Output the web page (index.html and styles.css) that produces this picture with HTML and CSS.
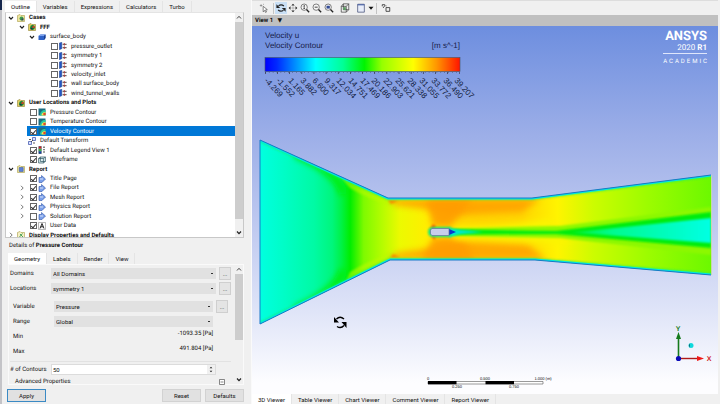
FILE: index.html
```html
<!DOCTYPE html>
<html lang="en">
<head>
  <meta charset="UTF-8">
  <meta name="viewport" content="width=device-width, initial-scale=1.0">
  <title>CFD-Post</title>
  <link rel="stylesheet" href="styles.css">
</head>
<body>
  <!-- Shared icons -->
  <svg class="defs" aria-hidden="true">
    <symbol id="chev-down" viewBox="0 0 8 8"><path d="M2 3l2 2.200 2-2.200" fill="none" stroke="#222" stroke-width="1.200"/></symbol>
    <symbol id="chev-up" viewBox="0 0 8 8"><path d="M2 5l2-2.200 2 2.200" fill="none" stroke="#444" stroke-width="1"/></symbol>
    <symbol id="chev-right" viewBox="0 0 8 8"><path d="M3 1.800l2.200 2.200-2.200 2.200" fill="none" stroke="#777" stroke-width="1"/></symbol>
    <symbol id="folder" viewBox="0 0 8 8">
      <path d="M.5 1.500L3 .5l1 1h3.500v6h-7z" fill="#f0e6a0" stroke="#a89b45" stroke-width=".6"/>
      <circle cx="4.500" cy="4.500" r="2" fill="#3c9c52"/><path d="M4.500 4.500h2v2h-2z" fill="#345"/>
    </symbol>
    <symbol id="folder-case" viewBox="0 0 8 8">
      <path d="M.5 1.500L3 .5l1 1h3.500v6h-7z" fill="#e5d262" stroke="#8d8130" stroke-width=".6"/>
      <circle cx="4.500" cy="4.500" r="2.400" fill="#17803a"/><path d="M4.500 3h2v2h-2z" fill="#d33a25"/><path d="M2.500 5h2v1.500h-2z" fill="#134"/>
    </symbol>
    <symbol id="folder-report" viewBox="0 0 8 8">
      <path d="M.5 1.500L3 .5l1 1h3.500v6h-7z" fill="#eee7a5" stroke="#a89b45" stroke-width=".6"/>
      <path d="M2.200 2.500h4v4h-4z" fill="#5b80d8" stroke="#35509c" stroke-width=".5"/>
    </symbol>
    <symbol id="folder-props" viewBox="0 0 8 8">
      <path d="M.5 1.500L3 .5l1 1h3.500v6h-7z" fill="#f4f0c4" stroke="#a89b45" stroke-width=".6"/>
      <path d="M2.500 6l3-3.500M3 3l3 3" stroke="#3c9c52" stroke-width=".9"/>
    </symbol>
    <symbol id="body" viewBox="0 0 8 8">
      <path d="M.5 3l2-1.500h5v3.500l-1.500 2H.5z" fill="#2f62c8"/><path d="M.5 3l2-1.500h5L6 3z" fill="#7da2ee"/><path d="M6 3l1.500-1.500V5L6 7z" fill="#183d8c"/>
    </symbol>
    <symbol id="boundary" viewBox="0 0 8 8">
      <path d="M.3 1L2.800.3v6.400L.3 7.700z" fill="#2456c4" stroke="#143273" stroke-width=".4"/>
      <path d="M3.600 2.300h4M3.600 5.700h4" stroke="#333" stroke-width=".9"/><path d="M5.300 1v2.600M5.300 4.400V7" stroke="#b33" stroke-width=".9"/>
    </symbol>
    <symbol id="contour" viewBox="0 0 8 8">
      <path d="M.5.5h7v7h-7z" fill="#1a6c80"/><path d="M2 7.500C2 4 4 2 7.500 2v5.500z" fill="#27c8a0"/><path d="M3.500 7.500c0-2 1.500-3.500 4-3.500v3.500z" fill="#f5e850"/><circle cx="6.500" cy="6" r="1.300" fill="#e2442c"/>
    </symbol>
    <symbol id="transform" viewBox="0 0 8 8">
      <path d="M.5 4.500h3v3h-3zM4.500.5h3v3h-3z" fill="#dbe3ff" stroke="#3149a8" stroke-width=".7"/><path d="M1 2.500h2M5 6h2M3 5l2-2" stroke="#333" stroke-width=".8"/>
    </symbol>
    <symbol id="legend" viewBox="0 0 8 8">
      <path d="M.8.300h2.500v2.500H.8z" fill="#d22"/><path d="M.8 2.800h2.500v2.400H.8z" fill="#3c4"/><path d="M.8 5.200h2.500v2.500H.8z" fill="#14a"/><path d="M.8.300h2.500v7.400H.8z" fill="none" stroke="#234" stroke-width=".5"/><path d="M6 .5v7" stroke="#333" stroke-width="1.200" stroke-dasharray="1.400 1"/>
    </symbol>
    <symbol id="wireframe" viewBox="0 0 8 8">
      <path d="M.6 2.500h4.800v4.500H.6zM2.400 1h5v4.500h-5zM.6 2.500L2.400 1M5.400 2.500l2-1.500M5.400 7l2-1.500" fill="#bfe0e6" fill-opacity=".5" stroke="#2c5560" stroke-width=".7"/>
    </symbol>
    <symbol id="page" viewBox="0 0 8 8">
      <path d="M1 2.500h2.500v-2L7.500 4 4 7.500H1z" fill="#7ba0ea" stroke="#3156a8" stroke-width=".6"/><path d="M2 4h3" stroke="#fff" stroke-width=".7"/>
    </symbol>
    <symbol id="text-page" viewBox="0 0 8 8">
      <path d="M.5.5h7v7h-7z" fill="#fff" stroke="#888" stroke-width=".6"/><path d="M2 6.500L4 1.500l2 5M2.800 4.800h2.400" fill="none" stroke="#111" stroke-width=".9"/>
    </symbol>
    <symbol id="magnifier" viewBox="0 0 12 12">
      <circle cx="5" cy="5" r="3.800" fill="#f7f7f7" stroke="#444" stroke-width=".8"/><path d="M7.800 7.800L11 11" stroke="#222" stroke-width="1.600"/>
    </symbol>
  </svg>

  <div class="app">
    <!-- Left panel: outline tree and details -->
    <aside class="sidebar">
      <nav class="tabs outline-tabs">
        <button class="tab active">Outline</button>
        <button class="tab">Variables</button>
        <button class="tab">Expressions</button>
        <button class="tab">Calculators</button>
        <button class="tab">Turbo</button>
      </nav>

      <div class="tree">
        <ul class="tree-list">
          <li class="row group"><svg><use href="#chev-down"/></svg><svg><use href="#folder"/></svg><span>Cases</span></li>
          <li class="row l1 group"><svg><use href="#chev-down"/></svg><svg><use href="#folder-case"/></svg><span>FFF</span></li>
          <li class="row l2"><svg><use href="#chev-down"/></svg><svg><use href="#body"/></svg><span>surface_body</span></li>
          <li class="row l3"><svg></svg><input type="checkbox" id="t1"><svg><use href="#boundary"/></svg><label for="t1">pressure_outlet</label></li>
          <li class="row l3"><svg></svg><input type="checkbox" id="t2"><svg><use href="#boundary"/></svg><label for="t2">symmetry 1</label></li>
          <li class="row l3"><svg></svg><input type="checkbox" id="t3"><svg><use href="#boundary"/></svg><label for="t3">symmetry 2</label></li>
          <li class="row l3"><svg></svg><input type="checkbox" id="t4"><svg><use href="#boundary"/></svg><label for="t4">velocity_inlet</label></li>
          <li class="row l3"><svg></svg><input type="checkbox" id="t5"><svg><use href="#boundary"/></svg><label for="t5">wall surface_body</label></li>
          <li class="row l3"><svg></svg><input type="checkbox" id="t6"><svg><use href="#boundary"/></svg><label for="t6">wind_tunnel_walls</label></li>
          <li class="row group"><svg><use href="#chev-down"/></svg><svg><use href="#folder-case"/></svg><span>User Locations and Plots</span></li>
          <li class="row l1"><svg></svg><input type="checkbox" id="t7"><svg><use href="#contour"/></svg><label for="t7">Pressure Contour</label></li>
          <li class="row l1"><svg></svg><input type="checkbox" id="t8"><svg><use href="#contour"/></svg><label for="t8">Temperature Contour</label></li>
          <li class="row l1 selected"><svg></svg><input type="checkbox" id="t9" checked><svg><use href="#contour"/></svg><label for="t9">Velocity Contour</label></li>
          <li class="row l1"><svg></svg><svg><use href="#transform"/></svg><span>Default Transform</span></li>
          <li class="row l1"><svg></svg><input type="checkbox" id="t10" checked><svg><use href="#legend"/></svg><label for="t10">Default Legend View 1</label></li>
          <li class="row l1"><svg></svg><input type="checkbox" id="t11" checked><svg><use href="#wireframe"/></svg><label for="t11">Wireframe</label></li>
          <li class="row group"><svg><use href="#chev-down"/></svg><svg><use href="#folder-report"/></svg><span>Report</span></li>
          <li class="row l1"><svg></svg><input type="checkbox" id="t12" checked><svg><use href="#page"/></svg><label for="t12">Title Page</label></li>
          <li class="row l1"><svg><use href="#chev-right"/></svg><input type="checkbox" id="t13" checked><svg><use href="#page"/></svg><label for="t13">File Report</label></li>
          <li class="row l1"><svg><use href="#chev-right"/></svg><input type="checkbox" id="t14" checked><svg><use href="#page"/></svg><label for="t14">Mesh Report</label></li>
          <li class="row l1"><svg><use href="#chev-right"/></svg><input type="checkbox" id="t15" checked><svg><use href="#page"/></svg><label for="t15">Physics Report</label></li>
          <li class="row l1"><svg><use href="#chev-right"/></svg><input type="checkbox" id="t16"><svg><use href="#page"/></svg><label for="t16">Solution Report</label></li>
          <li class="row l1"><svg></svg><input type="checkbox" id="t17" checked><svg><use href="#text-page"/></svg><label for="t17">User Data</label></li>
          <li class="row group"><svg><use href="#chev-right"/></svg><svg><use href="#folder-props"/></svg><span>Display Properties and Defaults</span></li>
        </ul>
        <div class="scrollbar">
          <svg><use href="#chev-up"/></svg>
          <div class="thumb"></div>
          <svg class="end"><use href="#chev-down"/></svg>
        </div>
      </div>

      <p class="details-title">Details of <strong>Pressure Contour</strong></p>

      <nav class="tabs details-tabs">
        <button class="tab active">Geometry</button>
        <button class="tab">Labels</button>
        <button class="tab">Render</button>
        <button class="tab">View</button>
      </nav>

      <div class="details">
        <form class="fields">
          <div class="field">
            <label for="domains">Domains</label>
            <select id="domains"><option>All Domains</option></select>
            <button type="button" class="more">...</button>
          </div>
          <div class="field">
            <label for="locations">Locations</label>
            <select id="locations"><option>symmetry 1</option></select>
            <button type="button" class="more">...</button>
          </div>
          <div class="field-group">
            <div class="field">
              <label for="variable">Variable</label>
              <select id="variable"><option>Pressure</option></select>
              <button type="button" class="more">...</button>
            </div>
            <div class="field">
              <label for="range">Range</label>
              <select id="range"><option>Global</option></select>
              <span class="blank"></span>
            </div>
            <div class="field value"><span>Min</span><output>-1093.35 [Pa]</output></div>
            <div class="field value"><span>Max</span><output>491.804 [Pa]</output></div>
          </div>
          <div class="field">
            <label for="contours"># of Contours</label>
            <div class="spin">
              <input type="text" id="contours" value="50">
              <svg viewBox="0 0 8 10"><path d="M2.500 3.500L4 2l1.500 1.500zM2.500 6.500L4 8l1.500-1.500z" fill="#222"/></svg>
            </div>
            <span class="blank"></span>
          </div>
          <div class="advanced">
            <span>Advanced Properties</span>
            <svg viewBox="0 0 6 6"><path d="M.5.5h5v5h-5zM1.500 3h3" fill="#fff" stroke="#555" stroke-width=".7"/></svg>
          </div>
        </form>
        <div class="scrollbar">
          <svg><use href="#chev-up"/></svg>
          <div class="thumb short"></div>
          <svg class="end"><use href="#chev-down"/></svg>
        </div>
      </div>

      <div class="actions">
        <button class="action primary">Apply</button>
        <button class="action">Reset</button>
        <button class="action">Defaults</button>
      </div>
    </aside>

    <!-- Right side: 3D viewer -->
    <main class="viewer">
      <div class="toolbar">
        <button class="tool wide" aria-label="Select"><svg viewBox="0 0 12 12"><path d="M5 4l5 4-2.200.3 1.200 2.500-1.200.5L6.700 9 5 10.500z" fill="#fff" stroke="#333" stroke-width=".7"/><path d="M1 3h3M2.500 1.500v3M5 2l1-1" stroke="#777" stroke-width=".8"/></svg></button>
        <span class="sep"></span>
        <button class="tool on" aria-label="Rotate"><svg viewBox="0 0 12 12"><path d="M3 3.500Q6 .8 9.500 3.500M9 8.500Q6 11.200 2.500 8.500" fill="none" stroke="#222" stroke-width="1.400"/><path d="M.5 1.500v4.500h4.500zM11.500 10.500V6H7z" fill="#222"/></svg></button>
        <button class="tool" aria-label="Pan"><svg viewBox="0 0 12 12"><path d="M6 .8L8 3H4zM6 11.200L8 9H4zM.8 6L3 4v4zM11.200 6L9 4v4z" fill="#222"/><path d="M6 4v4M4 6h4" stroke="#888" stroke-width=".6"/></svg></button>
        <button class="tool" aria-label="Zoom"><svg viewBox="0 0 12 12"><use href="#magnifier"/><path d="M5 3v4M4 4l1-1 1 1M4 6l1 1 1-1" fill="none" stroke="#222" stroke-width=".8"/></svg></button>
        <button class="tool" aria-label="Zoom box"><svg viewBox="0 0 12 12"><use href="#magnifier"/><path d="M3.200 5h3.600" stroke="#222" stroke-width="1"/></svg></button>
        <button class="tool" aria-label="Fit view"><svg viewBox="0 0 12 12"><use href="#magnifier"/><path d="M3 3.300h4v3.400H3z" fill="#334b95"/></svg></button>
        <button class="tool wider" aria-label="Projection"><svg viewBox="0 0 12 12"><path d="M1.500 4h6v7h-6zM4 1h6.500v7H4zM1.500 4L4 1M7.500 4l3-3M7.500 11l3-3" fill="none" stroke="#333" stroke-width=".8"/><path d="M4 5h3v3.500H4z" fill="#5a9a60"/></svg></button>
        <button class="tool" aria-label="Viewports"><svg viewBox="0 0 12 12"><path d="M2 1.500h8v9.500H2z" fill="#e8edfa" stroke="#444f78" stroke-width=".9"/><path d="M2 2.200h8" stroke="#445fa8" stroke-width="1.200"/></svg></button>
        <button class="tool narrow" aria-label="Viewport menu"><svg viewBox="0 0 12 12"><path d="M1 3.500h10L6 9.500z" fill="#111"/></svg></button>
        <span class="sep"></span>
        <button class="tool wide" aria-label="Toggle hotspots"><svg viewBox="0 0 12 12"><path d="M1.500 4V2h3v1.500L3 5v1M6 5.500h4.500V10H6zM6 4V3" fill="none" stroke="#333" stroke-width="1"/></svg></button>
      </div>
      <div class="view-bar">View 1 <span class="caret">▼</span></div>

      <div class="scene">
        <svg class="plot" viewBox="252 26 466 368" role="img" aria-label="Velocity contour plot">
          <defs>
            <linearGradient id="flow" gradientUnits="userSpaceOnUse" x1="260" y1="0" x2="711" y2="0">
              <stop offset="0" stop-color="#00ffe0"/>
              <stop offset=".05" stop-color="#00fdc8"/>
              <stop offset=".12" stop-color="#00faa4"/>
              <stop offset=".16" stop-color="#00f67c"/>
              <stop offset=".18" stop-color="#00f248"/>
              <stop offset=".2" stop-color="#00ee00"/>
              <stop offset=".23" stop-color="#7efa00"/>
              <stop offset=".27" stop-color="#b4fc00"/>
              <stop offset=".31" stop-color="#ecfa00"/>
              <stop offset=".37" stop-color="#ffee00"/>
              <stop offset=".42" stop-color="#ffd400"/>
              <stop offset=".58" stop-color="#ffd400"/>
              <stop offset=".66" stop-color="#fff400"/>
              <stop offset=".74" stop-color="#ccfc00"/>
              <stop offset=".86" stop-color="#9cfc00"/>
              <stop offset="1" stop-color="#6cf800"/>
            </linearGradient>
            <linearGradient id="wake" gradientUnits="userSpaceOnUse" x1="560" y1="0" x2="711" y2="0">
              <stop offset="0" stop-color="#00f020"/>
              <stop offset=".35" stop-color="#00fa90"/>
              <stop offset="1" stop-color="#00ffe4"/>
            </linearGradient>
            <linearGradient id="scale">
              <stop offset="0" stop-color="#0000ff"/>
              <stop offset=".06" stop-color="#0028ff"/>
              <stop offset=".26" stop-color="#00ffff"/>
              <stop offset=".4" stop-color="#00ff96"/>
              <stop offset=".51" stop-color="#00f400"/>
              <stop offset=".6" stop-color="#96ff00"/>
              <stop offset=".76" stop-color="#ffff00"/>
              <stop offset=".88" stop-color="#ff9600"/>
              <stop offset="1" stop-color="#ff1400"/>
            </linearGradient>
            <filter id="soft" filterUnits="userSpaceOnUse" x="250" y="130" width="470" height="200"><feGaussianBlur stdDeviation="3"/></filter>
            <filter id="fine" filterUnits="userSpaceOnUse" x="250" y="130" width="470" height="200"><feGaussianBlur stdDeviation="1"/></filter>
            <clipPath id="tunnel"><path d="M260 140L388 198H532L711 175V275L535 260H390L260 324z"/></clipPath>
          </defs>

          <!-- Velocity field inside the tunnel -->
          <g clip-path="url(#tunnel)">
            <path d="M260 140L388 198H532L711 175V275L535 260H390L260 324z" fill="url(#flow)"/>
            <path d="M296 154Q336 170 344 194M296 310Q336 292 344 270" fill="none" stroke="#00ee10" stroke-width="8" filter="url(#soft)"/>
            <path d="M340 176L388 198 392 206Q366 198 350 188zM346 282L390 260 392 252Q366 262 350 272z" fill="#b8fa00" filter="url(#fine)" opacity=".6"/>
            <path d="M390 199H540L522 212 462 215 432 210 394 205zM390 259H546L528 245 462 242 432 248 396 253z" fill="#ffa000" opacity=".85" filter="url(#soft)"/>
            <path d="M426 200H472L456 220 450 226H433zM433 238H450L466 244 474 260H422z" fill="#ff9c00" filter="url(#soft)" opacity=".9"/>
            <path d="M388 200l10 1-7 3zM390 258l10-1-7-3z" fill="#ff7000" filter="url(#fine)" opacity=".8"/>
            <path d="M454 226Q500 226 550 219L570 245Q500 239 454 238z" fill="#fbf400" filter="url(#soft)"/>
            <path d="M430 229l3-5 3 2-2 4zM431 235l5 2-2 3z" fill="#ff5a00" filter="url(#fine)"/>
            <path d="M450 229Q500 227 560 226L711 207V255L560 238Q500 237 450 236z" fill="#8cf800" filter="url(#fine)"/>
            <path d="M450 229Q480 230 556 231L711 212V248L556 234Q480 234 450 235z" fill="#00ec10" filter="url(#fine)"/>
            <path d="M572 232.500L711 218V243z" fill="url(#wake)" filter="url(#fine)"/>
            <path d="M449 228l12 2 22 2-22 2-12 3z" fill="#00e8d0" filter="url(#fine)"/>
            <path d="M428 232Q428 227 434 227H451V237H434Q428 237 428 232z" fill="#10e880" filter="url(#fine)"/>
            <path d="M260 140L388 198H532L711 175M260 324L390 260H535L711 275" fill="none" stroke="#20f060" stroke-width="4" filter="url(#fine)" opacity=".7"/>
            <path d="M260 140L388 198H532L711 175M260 324L390 260H535L711 275" fill="none" stroke="#00e8e0" stroke-width="3"/>
          </g>
          <path d="M260 324V140L388 198H532L711 175M260 324L390 260H535L711 275" fill="none" stroke="#1878c8" stroke-width="1"/>
          <path d="M711.500 175V275" stroke="#c8d8a8" stroke-width="1"/>
          <path d="M449 229l7 3-7 3z" fill="#0838d0"/>
          <path d="M432 228.500h17v7h-17l-1.500-1.500v-4z" fill="#c8cdec" stroke="#6a7098" stroke-width=".7"/>

          <!-- Legend -->
          <g class="legend-title">
            <text x="265" y="38">Velocity u</text>
            <text x="265" y="48">Velocity Contour</text>
            <text x="460" y="48" text-anchor="end">[m s^-1]</text>
          </g>
          <rect x="265" y="57.500" width="195" height="14" fill="url(#scale)" stroke="#456" stroke-width=".6"/>
          <path d="M265 72.500h195" stroke="#334" stroke-width="1" stroke-dasharray=".6 3.300" opacity=".6"/>
          <path d="M265 73h195" stroke="#334" stroke-width="2" stroke-dasharray=".7 11.450"/>
          <g class="legend-values">
            <text transform="translate(264 81) rotate(47)">-4.269</text>
            <text transform="translate(276 81) rotate(47)">-1.552</text>
            <text transform="translate(288 81) rotate(47)">1.165</text>
            <text transform="translate(300 81) rotate(47)">3.882</text>
            <text transform="translate(312 81) rotate(47)">6.600</text>
            <text transform="translate(324 81) rotate(47)">9.317</text>
            <text transform="translate(336 81) rotate(47)">12.034</text>
            <text transform="translate(348 81) rotate(47)">14.751</text>
            <text transform="translate(360 81) rotate(47)">17.469</text>
            <text transform="translate(371 81) rotate(47)">20.186</text>
            <text transform="translate(383 81) rotate(47)">22.903</text>
            <text transform="translate(395 81) rotate(47)">25.621</text>
            <text transform="translate(407 81) rotate(47)">28.338</text>
            <text transform="translate(419 81) rotate(47)">31.055</text>
            <text transform="translate(431 81) rotate(47)">33.772</text>
            <text transform="translate(443 81) rotate(47)">36.490</text>
            <text transform="translate(454 81) rotate(47)">39.207</text>
          </g>

          <!-- Product mark -->
          <g class="brand">
            <text class="brand-name" x="707" y="40">ANSYS</text>
            <text class="brand-release" x="707" y="50">2020 <tspan class="strong">R1</tspan></text>
            <path d="M663 53.500h44" stroke="#dfe6fb" stroke-width="1"/>
            <text class="brand-edition" x="709" y="63">ACADEMIC</text>
          </g>

          <!-- Rotate cursor -->
          <path d="M336.500 319Q340 315.500 344 319M344 325.500Q341 329 337 326.500" fill="none" stroke="#000" stroke-width="1.400"/>
          <path d="M334 317v5.500h5zM346.500 328v-6h-5z" fill="#000"/>

          <!-- Ruler -->
          <path d="M428 381.500h115v2.500H428z" fill="#fff" stroke="#555" stroke-width=".6"/>
          <path d="M428 381h28.500v3.300H428zM485.500 381H514v3.300h-28.500z" fill="#000"/>
          <g class="ruler">
            <text x="428" y="380">0</text>
            <text x="485" y="380">0.500</text>
            <text x="543" y="380">1.000 (m)</text>
            <text x="457" y="388">0.250</text>
            <text x="514" y="388">0.750</text>
          </g>

          <!-- Axis triad -->
          <path d="M678.500 358V338" stroke="#157a1c" stroke-width="1.600"/><path d="M678.500 332l2.500 7h-5z" fill="#157a1c"/>
          <path d="M678 358.500h20" stroke="#b01818" stroke-width="1.400"/><path d="M704 358.500l-7-2.500v5z" fill="#f01818"/>
          <circle cx="678.500" cy="358.500" r="2.600" fill="#0a0ab8"/>
          <circle cx="691" cy="345.500" r="2.500" fill="#10d8dc"/><path d="M690 343.500a2.500 2.500 0 0 0 0 4z" fill="#08707a"/>
          <text class="axis axis-y" x="678" y="331">Y</text>
          <text class="axis axis-x" x="709" y="361">X</text>
        </svg>
      </div>

      <nav class="tabs viewer-tabs">
        <button class="tab active">3D Viewer</button>
        <button class="tab">Table Viewer</button>
        <button class="tab">Chart Viewer</button>
        <button class="tab">Comment Viewer</button>
        <button class="tab">Report Viewer</button>
      </nav>
    </main>
  </div>
</body>
</html>
```

FILE: styles.css
```css
* {
  box-sizing: border-box;
}
body {
  margin: 0;
  background: #f0f0f0;
  font-family: Roboto, "Noto Sans", sans-serif;
  font-size: 6px;
  line-height: 9px;
  color: #111;
  text-rendering: geometricPrecision;
}
button, input, select {
  font: inherit;
  color: inherit;
  margin: 0;
  padding: 0;
  border: none;
  border-radius: 0;
}
svg {
  display: block;
  flex: none;
}
.defs {
  position: absolute;
  width: 0;
  height: 0;
}
.app {
  display: flex;
  height: 100vh;
}

/* Left panel */
.sidebar {
  width: 35%;
  flex: none;
  display: flex;
  flex-direction: column;
  padding: 1px 7px 2px 5px;
  background:
    linear-gradient(#15264c 10px, #c4c4c8 10px) left / 2px 100% no-repeat;
  border-right: 1px solid #fafafa;
}
.tabs {
  display: flex;
  flex: none;
}
.tab {
  background: #f0f0f0;
  padding: 0 6px;
  border-right: 1px solid #e4e4e4;
  white-space: nowrap;
}
.tab.active {
  background: #fff;
}
.outline-tabs {
  height: 11px;
}

/* Tree */
.tree {
  display: flex;
  height: 226px;
  flex: none;
  background: #fff;
  border: 1px solid #c8c8c8;
  border-top-color: #e4e4e4;
  overflow: hidden;
}
.tree-list {
  flex: 1;
  height: 227px;
  margin: 0;
  padding: 0;
  list-style: none;
  display: grid;
  grid-auto-rows: 1fr;
}
.row {
  display: flex;
  align-items: center;
  gap: 2px;
  padding-left: 1px;
  min-height: 0;
  white-space: nowrap;
}
.row svg {
  width: 8px;
  height: 8px;
}
.row span, .row label {
  margin-left: 2px;
}
.group {
  font-weight: bold;
}
.l1 {
  padding-left: 12px;
}
.l2 {
  padding-left: 22px;
}
.l3 {
  padding-left: 33px;
}
.selected {
  color: #fff;
  background: linear-gradient(to right, #fff 21px, #0078d7 21px);
}
.row input {
  appearance: none;
  display: grid;
  place-items: center;
  width: 7px;
  height: 7px;
  margin: 0 -1px 0 2px;
  border: 1px solid #666;
  background: #fff;
  flex: none;
}
.row input:checked::before {
  content: "";
  width: 2px;
  height: 4px;
  border: solid #333;
  border-width: 0 1px 1px 0;
  transform: rotate(40deg);
}

.scrollbar {
  width: 8px;
  flex: none;
  display: flex;
  flex-direction: column;
  background: #f0f0f0;
}
.scrollbar svg {
  width: 8px;
  height: 9px;
}
.scrollbar .end {
  margin-top: auto;
}
.thumb {
  height: 197px;
  background: #cdcdcd;
}
.thumb.short {
  height: 66px;
}

/* Details */
.details-title {
  margin: 3px 4px 2px;
  line-height: 10px;
}
.details-tabs {
  height: 11px;
  padding-left: 3px;
}
.details {
  flex: 1;
  min-height: 0;
  display: flex;
  margin: 0 0 4px 3px;
  border: 1px solid #fafafa;
}
.fields {
  flex: 1;
  padding: 2px 4px 0 1px;
  display: flex;
  flex-direction: column;
  gap: 2px;
}
.field {
  display: grid;
  grid-template-columns: 38px 1fr 12px;
  column-gap: 3px;
  align-items: center;
  height: 13px;
}
.fields label {
  white-space: nowrap;
}
.field select {
  appearance: none;
  height: 11px;
  padding: 0 2px;
  background: #e1e1e1 linear-gradient(#333, #333) right 3px center / 2px 1px no-repeat;
}
.more {
  height: 13px;
  background: #e4e4e4;
  border: 1px solid #cfcfcf;
  line-height: 9px;
}
.field-group {
  display: flex;
  flex-direction: column;
  gap: 2px;
  margin-top: 2px;
  padding: 1px 3px 3px;
  border-bottom: 1px solid #e2e2e2;
}
.value output {
  text-align: right;
  line-height: 7px;
  align-self: start;
}
.spin {
  display: flex;
  height: 11px;
  background: #fff;
  border: 1px solid #dcdcdc;
}
.spin input {
  flex: 1;
  min-width: 0;
  padding-left: 1px;
  background: #fff;
}
.spin svg {
  width: 8px;
  height: 9px;
  background: #f0f0f0;
}
.advanced {
  display: flex;
  justify-content: space-between;
  align-items: center;
  padding: 0 6px 0 5px;
  height: 9px;
}
.advanced svg {
  width: 6px;
  height: 6px;
}

.actions {
  display: flex;
  gap: 4px;
  flex: none;
  padding-left: 2px;
}
.action {
  width: 39px;
  height: 13px;
  background: #e1e1e1;
  border: 1px solid #d2d2d2;
}
.action.primary {
  margin-right: auto;
  border-color: #3b8ac4;
}

/* Viewer */
.viewer {
  flex: 1;
  min-width: 0;
  display: flex;
  flex-direction: column;
  border-right: 2px solid #f0f0f0;
}
.toolbar {
  display: flex;
  align-items: center;
  height: 15px;
  flex: none;
  padding-left: 4px;
  border-top: 1px solid #ddd;
}
.tool {
  width: 12px;
  height: 12px;
  background: none;
}
.tool svg {
  width: 10px;
  height: 10px;
  margin: 0 auto;
}
.tool.wide {
  width: 16px;
}
.tool.wider {
  width: 20px;
}
.tool.narrow {
  width: 8px;
}
.tool.narrow svg {
  width: 6px;
}
.tool.on {
  background: #c9dff5;
}
.sep {
  width: 1px;
  height: 11px;
  margin: 0 1px;
  background: #c4c4c4;
}
.view-bar {
  height: 11px;
  flex: none;
  padding-left: 3px;
  background: #c0c0c0;
  font-weight: bold;
  line-height: 11px;
}
.caret {
  margin-left: 3px;
  font-family: "DejaVu Sans", sans-serif;
}
.scene {
  flex: 1;
  min-height: 0;
  background: linear-gradient(#6d8edf, #9dafe8 30%, #c0caf0 55%, #e0e5f8 78%, #fdfdff 97%);
}
.plot {
  width: 100%;
  height: 100%;
}
.legend-title {
  font: 8px "Liberation Sans", Arial, sans-serif;
  fill: #16204a;
}
.legend-values {
  font: 8px "Liberation Sans", Arial, sans-serif;
  fill: #101a3c;
}
.brand {
  fill: #fff;
  text-anchor: end;
}
.brand-name {
  font-size: 13px;
  font-weight: bold;
}
.brand-release {
  font-size: 8px;
}
.strong {
  font-weight: bold;
}
.brand-edition {
  font-size: 6px;
  letter-spacing: 2px;
}
.ruler {
  font: 4px "Liberation Sans", Arial, sans-serif;
  text-anchor: middle;
}
.axis {
  font: bold 7px "Liberation Sans", Arial, sans-serif;
  text-anchor: middle;
}
.axis-y {
  fill: #157a1c;
}
.axis-x {
  fill: #d01818;
}
.viewer-tabs {
  height: 10px;
}
```
